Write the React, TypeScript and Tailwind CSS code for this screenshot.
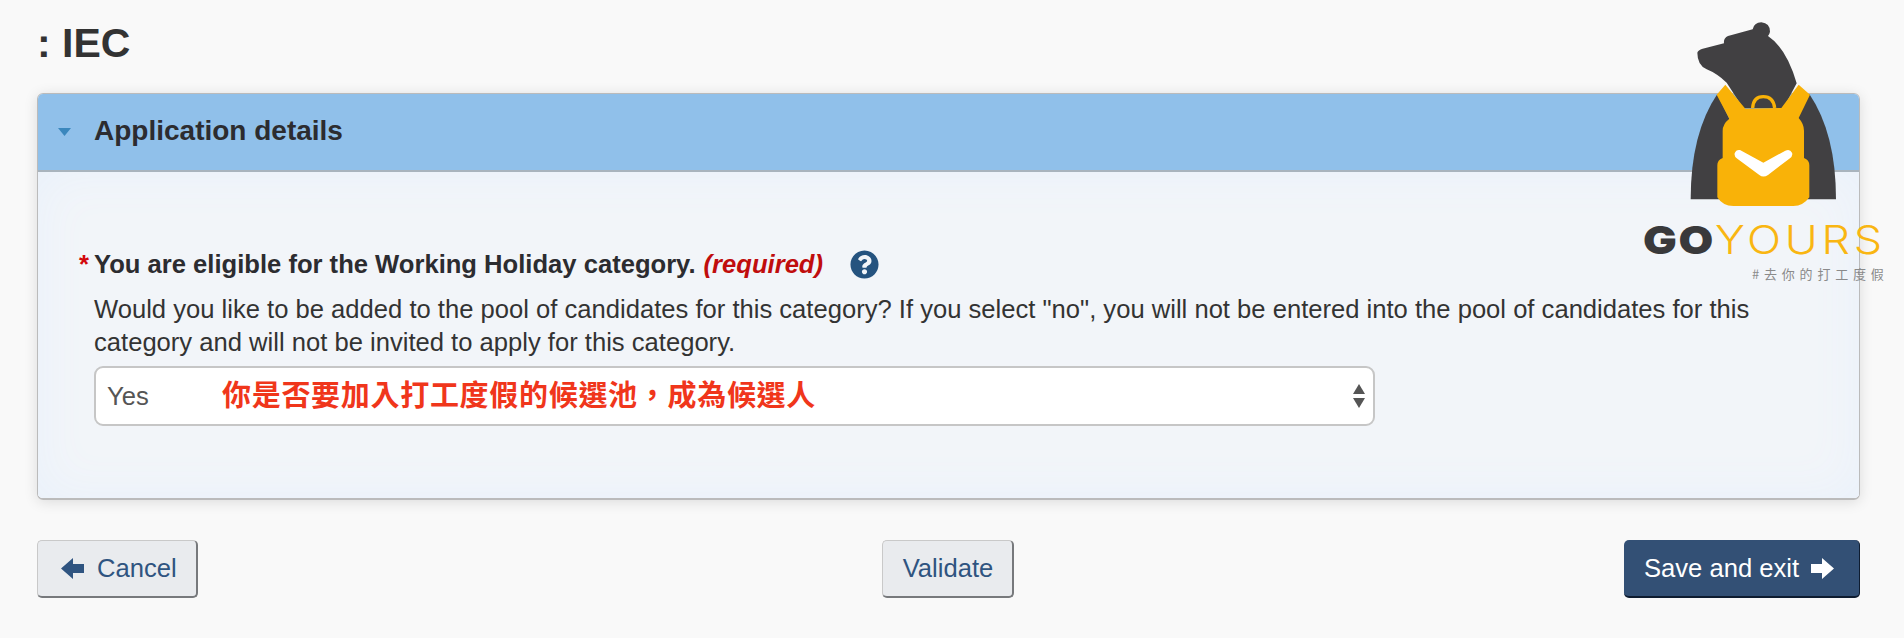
import { FaQuestionCircle } from "react-icons/fa";

function ArrowLeft() {
  return (
    <svg width="23" height="21" viewBox="0 0 23 21" className="shrink-0">
      <polygon points="0,10.5 12,0 12,6 23,6 23,15 12,15 12,21" fill="#2f5480" />
    </svg>
  );
}

function ArrowRight() {
  return (
    <svg width="23" height="21" viewBox="0 0 23 21" className="shrink-0">
      <polygon points="23,10.5 11,0 11,6 0,6 0,15 11,15 11,21" fill="#ffffff" />
    </svg>
  );
}

function Logo() {
  return (
    <div className="absolute top-0 right-0 w-[304px] h-[300px]">
      <svg width="304" height="208" viewBox="0 0 912 624" className="block">
        <path
          d="M292 158 Q294 150 308 146 L372 130 Q370 114 384 108 L458 88 Q462 68 484 67 Q510 70 510 95 Q508 104 504 108 Q560 145 590 250 L550 325 L430 325 L380 248 Q350 220 320 208 Q292 195 292 158Z"
          fill="#414042"
        />
        <path d="M352 282 Q272 400 272 598 L370 598 L390 360Z" fill="#414042" />
        <path d="M628 282 Q708 400 708 598 L610 598 L590 360Z" fill="#414042" />
        <path
          d="M350 284 L376 254 L436 326 L544 324 L596 254 L630 284 L596 354 Q612 372 612 392 L612 474 Q628 480 628 496 L628 592 Q610 618 580 618 L400 618 Q368 618 352 592 L352 496 Q352 480 368 474 L368 392 Q368 372 388 356Z"
          fill="#f9b208"
        />
        <path d="M458 324 Q460 290 490 290 Q520 290 524 324" fill="none" stroke="#f9b208" strokeWidth="10" />
        <path
          d="M420 450 Q408 448 404 460 Q402 470 412 476 L478 525 Q490 534 504 525 L568 476 Q580 468 576 458 Q570 446 556 452 L490 488Z"
          fill="#ffffff"
        />
      </svg>
      <div className="mt-[9px] ml-[43px] flex origin-left scale-x-[1.15] text-[39px] leading-[46px] font-['Inter',sans-serif] whitespace-nowrap">
        <span className="font-black tracking-[1.5px] text-[#39393b]">GO</span>
        <span className="font-light tracking-[3.2px] text-[#f9b612]">YOURS</span>
      </div>
      <div className="mt-[2px] ml-[152px] text-[13px] leading-[18px] tracking-[4.8px] text-[#8a8a8a] whitespace-nowrap font-['Noto_Sans_CJK_TC',sans-serif]">
        #去你的打工度假
      </div>
    </div>
  );
}

export default function App() {
  return (
    <div className="relative min-h-[638px] overflow-hidden bg-[#f9f9f9] pl-[37px] pr-[44px] text-[#333] font-['Liberation_Sans','Noto_Sans_CJK_TC',sans-serif]">
      <h1 className="pt-[20px] h-[93px] text-[41px] leading-[46px] font-bold text-[#333]">: IEC</h1>

      <section className="rounded-[6px] border border-[#bbbbbb] border-b-2 shadow-[0_2px_14px_rgba(0,0,0,0.12)] overflow-hidden">
        <header className="flex items-center h-[78px] bg-[#90c0ea] border-b-2 border-[#a9b4bd] pl-[20px]">
          <svg width="13" height="8" viewBox="0 0 13 8" className="shrink-0">
            <polygon points="0,0 13,0 6.5,8" fill="#3b87bd" />
          </svg>
          <h2 className="ml-[23px] text-[28px] leading-[34px] -mt-[2px] font-bold text-[#2c2c30]">Application details</h2>
        </header>
        <div className="h-[326px] bg-[#f2f5f9] shadow-[inset_0_0_50px_#e9f1fb] pl-[56px] pr-[100px] pt-[74px]">
          <div className="flex items-center h-[36px]">
            <span className="-ml-[15px] w-[15px] text-[25.6px] leading-[28px] font-bold text-[#d3080c]">*</span>
            <span className="text-[25.6px] font-bold text-[#2c2c30]">You are eligible for the Working Holiday category.</span>
            <em className="ml-[8px] text-[25.6px] font-bold text-[#c00d0d]">(required)</em>
            <FaQuestionCircle className="ml-[27px] w-[29px] h-[29px] shrink-0 text-[#25537f]" />
          </div>
          <p className="mt-[11px] w-[1680px] text-[25.6px] leading-[33px] text-[#333]">
            Would you like to be added to the pool of candidates for this category? If you select "no", you will not be entered into the pool of candidates for this category and will not be invited to apply for this category.
          </p>
          <div className="mt-[7px] flex items-center w-[1281px] h-[60px] rounded-[9px] border-2 border-[#c6c6c6] bg-white pl-[11px] pr-[8px]">
            <span className="w-[115px] text-[25.6px] text-[#555]">Yes</span>
            <span className="text-[29px] leading-none font-bold tracking-[0.7px] text-[#f0361b]">你是否要加入打工度假的候選池，成為候選人</span>
            <svg width="12" height="24" viewBox="0 0 12 24" className="ml-auto shrink-0">
              <polygon points="6,0 12,10 0,10" fill="#555555" />
              <polygon points="0,14 12,14 6,24" fill="#555555" />
            </svg>
          </div>
        </div>
      </section>

      <footer className="grid grid-cols-3 items-start mt-[40px]">
        <button className="justify-self-start flex items-center gap-[13px] h-[58px] w-[161px] rounded-[5px] border border-[#c9c9c9] border-r-2 border-b-2 border-r-[#77797c] border-b-[#77797c] bg-[#e9ebee] pl-[23px] text-[25.6px] text-[#2f5480]">
          <ArrowLeft />
          Cancel
        </button>
        <button className="justify-self-center h-[58px] w-[132px] rounded-[5px] border border-[#c9c9c9] border-r-2 border-b-2 border-r-[#77797c] border-b-[#77797c] bg-[#e9ebee] text-[25.6px] text-[#2f5480]">
          Validate
        </button>
        <button className="justify-self-end flex items-center gap-[12px] h-[58px] w-[236px] rounded-[5px] border-b-2 border-r border-[#0e1c30] bg-[#335075] pl-[20px] text-[25.6px] text-white">
          Save and exit
          <ArrowRight />
        </button>
      </footer>

      <Logo />
    </div>
  );
}
